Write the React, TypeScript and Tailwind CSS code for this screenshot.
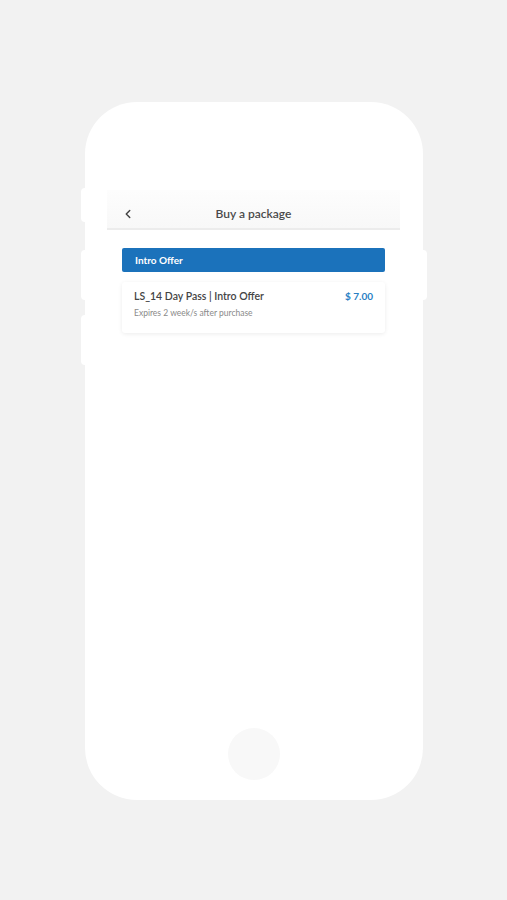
import { ChevronLeft } from "lucide-react";

export default function App() {
  return (
    <div
      className="min-h-[900px] w-[507px] bg-[#f2f2f2] pt-[102px] pl-[85px]"
      style={{ fontFamily: "Lato, 'Noto Sans', sans-serif" }}
    >
      <div className="relative flex h-[698px] w-[338px] flex-col rounded-[52px] bg-white">
        {/* side buttons */}
        <div className="absolute left-[-4px] top-[86px] h-[34px] w-[4px] rounded-l bg-white" />
        <div className="absolute left-[-4px] top-[148px] h-[50px] w-[4px] rounded-l bg-white" />
        <div className="absolute left-[-4px] top-[213px] h-[50px] w-[4px] rounded-l bg-white" />
        <div className="absolute right-[-4px] top-[148px] h-[50px] w-[4px] rounded-r bg-white" />

        <div className="mt-[88px] ml-[22px] flex w-[293px] flex-col">
          <div className="flex h-[40px] items-center border-b-2 border-[#ececec] bg-gradient-to-b from-[#fdfdfd] to-[#f8f8f8] px-[14px] pt-[9px]">
            <ChevronLeft className="h-[14px] w-[14px] text-[#444]" strokeWidth={2.5} />
            <div className="flex-1 pr-[14px] text-center text-[12px] font-semibold text-[#4a4a4a]">
              Buy a package
            </div>
          </div>

          <div className="mt-[18px] flex flex-col px-[15px]">
            <div className="flex h-[24px] items-center rounded-[2px] bg-[#1b72bb] px-[13px] text-[10px] font-bold text-white">
              Intro Offer
            </div>
            <div className="mt-[10px] flex flex-col rounded-[3px] bg-white px-[12px] pt-[7px] pb-[13px] shadow-[0_1px_4px_rgba(0,0,0,0.08)]">
              <div className="flex items-center justify-between">
                <span className="text-[10.5px] font-semibold text-[#444]">LS_14 Day Pass | Intro Offer</span>
                <span className="text-[10px] font-bold text-[#2a7fc4]">$ 7.00</span>
              </div>
              <div className="mt-[2px] text-[8.5px] text-[#8a8a8a]">Expires 2 week/s after purchase</div>
            </div>
          </div>
        </div>

        <div className="mt-auto mb-[20px] flex justify-center">
          <div className="h-[52px] w-[52px] rounded-full bg-[#f8f8f8]" />
        </div>
      </div>
    </div>
  );
}
